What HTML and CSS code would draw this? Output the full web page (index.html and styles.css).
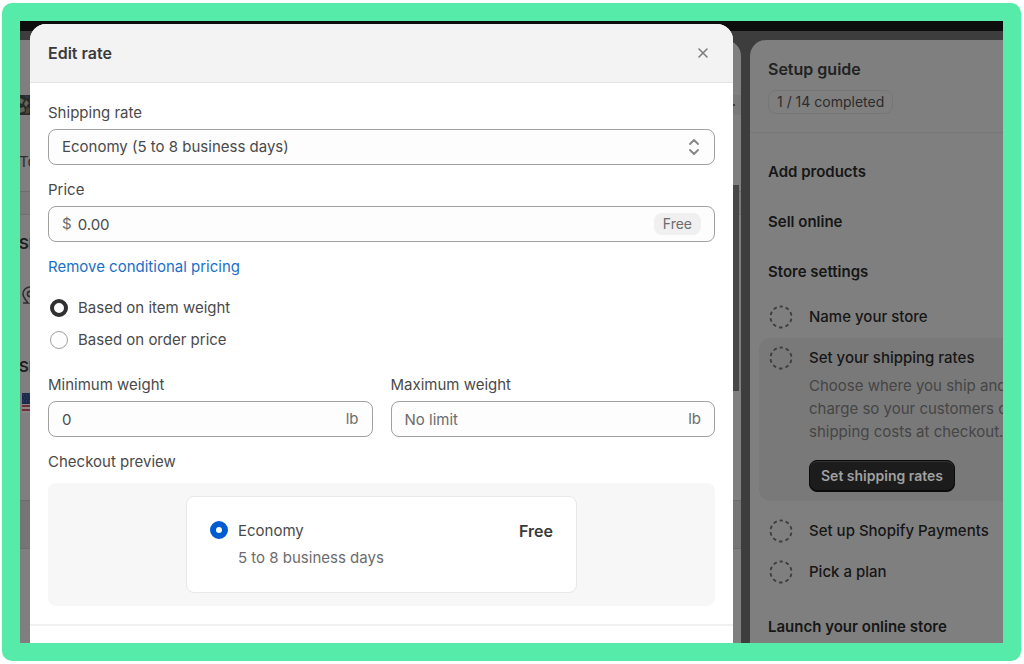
FILE: index.html
```
<!DOCTYPE html>
<html lang="en">

<head>
    <meta charset="UTF-8">
    <title>Edit rate</title>
    <link rel="stylesheet" href="styles.css">
</head>

<body>
    <svg class="defs" width="0" height="0">
        <symbol id="todo" viewBox="0 0 24 24">
            <circle cx="12" cy="12" r="10.5" fill="none" stroke="#3d3d3d" stroke-width="1.8" stroke-dasharray="3.6 3" stroke-dashoffset="1.8" transform="rotate(-90 12 12)" />
        </symbol>
    </svg>
    <div class="frame">
        <div class="screen">
            <div class="topbar"></div>
            <div class="page">
                <!-- settings page behind the dialog -->
                <section class="settings">
                    <div class="store">
                        <svg width="14" height="20" viewBox="0 0 14 20">
                            <rect width="14" height="20" fill="#2c2a28" />
                            <path d="M0 3l4 2-2 4-2-1zM6 5l3 3-3 4-2-3zM0 13l4-1 1 4-5 2z" fill="#66645c" />
                            <path d="M7 12l3 2-1 4-4 1z" fill="#4c4630" />
                            <path d="M4 0l5 1-2 3z" fill="#263a5a" />
                        </svg>
                        <span class="mark"></span>
                    </div>
                    <div class="row total">To</div>
                    <div class="strip"></div>
                    <h3 class="row">Sh</h3>
                    <div class="row place">
                        <svg width="16" height="20" viewBox="0 0 16 20" fill="none" stroke="#2e2e2e" stroke-width="1.6">
                            <path d="M1 17H6C3 13 1 11 1 8a7 7 0 0 1 14 0c0 4-4 6-7 10" />
                            <circle cx="8" cy="8" r="2.6" />
                        </svg>
                    </div>
                    <h3 class="row zone">Sh</h3>
                    <div class="row flag">
                        <svg width="26" height="20" viewBox="0 0 26 20">
                            <rect width="26" height="20" rx="1" fill="#8c8585" />
                            <path d="M0 1h26M0 5h26M0 9h26M0 13h26M0 17h26" stroke="#6e3038" stroke-width="2" />
                            <rect width="12" height="11" fill="#1c2a4e" />
                            <path d="M1 2h10M2 5h10M1 8h10" stroke="#3c476a" stroke-dasharray="1 2" />
                        </svg>
                    </div>
                    <div class="shade"></div>
                    <div class="scrollbar"></div>
                </section>

                <aside class="guide">
                    <header class="guide-head">
                        <h2>Setup guide</h2>
                        <span class="progress">1 / 14 completed</span>
                    </header>
                    <div class="guide-body">
                        <h3>Add products</h3>
                        <h3>Sell online</h3>
                        <h3>Store settings</h3>
                        <div class="task">
                            <svg class="todo"><use href="#todo" /></svg>
                            <h4>Name your store</h4>
                        </div>
                        <div class="task active">
                            <svg class="todo"><use href="#todo" /></svg>
                            <div>
                                <h4>Set your shipping rates</h4>
                                <p>Choose where you ship and<br>charge so your customers c<br>shipping costs at checkout.</p>
                                <button type="button" class="primary">Set shipping rates</button>
                            </div>
                        </div>
                        <div class="task">
                            <svg class="todo"><use href="#todo" /></svg>
                            <h4>Set up Shopify Payments</h4>
                        </div>
                        <div class="task">
                            <svg class="todo"><use href="#todo" /></svg>
                            <h4>Pick a plan</h4>
                        </div>
                        <h3 class="launch">Launch your online store</h3>
                    </div>
                </aside>
            </div>

            <!-- dialog -->
            <form class="modal" role="dialog" aria-labelledby="title">
                <header class="modal-head">
                    <h1 id="title">Edit rate</h1>
                    <button type="button" class="close" aria-label="Close">
                        <svg width="12" height="12" viewBox="0 0 12 12" stroke="#7d7d7d" stroke-width="1.6" stroke-linecap="round">
                            <path d="M2 2l8 8M10 2l-8 8" />
                        </svg>
                    </button>
                </header>
                <div class="modal-body">
                    <div class="field">
                        <label for="rate">Shipping rate</label>
                        <div class="control">
                            <select id="rate">
                                <option>Economy (5 to 8 business days)</option>
                            </select>
                            <svg width="14" height="16" viewBox="0 0 14 16" fill="none" stroke="#858585" stroke-width="1.8" stroke-linecap="round" stroke-linejoin="round">
                                <path d="M3 5l4-4 4 4M3 11l4 4 4-4" />
                            </svg>
                        </div>
                    </div>
                    <div class="field">
                        <label for="price">Price</label>
                        <div class="control">
                            <span class="unit">$</span>
                            <input id="price" type="text" value="0.00">
                            <span class="badge">Free</span>
                        </div>
                    </div>
                    <a class="link" href="#">Remove conditional pricing</a>
                    <div class="choices">
                        <label><input type="radio" name="basis" checked>Based on item weight</label>
                        <label><input type="radio" name="basis">Based on order price</label>
                    </div>
                    <div class="columns">
                        <div class="field">
                            <label for="min">Minimum weight</label>
                            <div class="control">
                                <input id="min" type="text" value="0">
                                <span class="unit">lb</span>
                            </div>
                        </div>
                        <div class="field">
                            <label for="max">Maximum weight</label>
                            <div class="control">
                                <input id="max" type="text" placeholder="No limit">
                                <span class="unit">lb</span>
                            </div>
                        </div>
                    </div>
                    <div class="checkout">
                        <h2>Checkout preview</h2>
                        <div class="preview">
                            <div class="card">
                                <input id="economy" class="blue" type="radio" name="preview" checked>
                                <div class="card-text">
                                    <label for="economy">Economy</label>
                                    <p>5 to 8 business days</p>
                                </div>
                                <strong>Free</strong>
                            </div>
                        </div>
                    </div>
                </div>
                <footer class="modal-foot"></footer>
            </form>
        </div>
    </div>
</body>

</html>
```
FILE: styles.css
```
* {
    margin: 0;
    padding: 0;
    box-sizing: border-box;
}

body {
    background: #fff;
    padding: 3px 3px 3px 2px;
    font-family: Inter, sans-serif;
    font-size: 15px;
    line-height: 20px;
    color: #4a4a4a;
}

input,
select,
button {
    font: inherit;
    color: inherit;
}

.defs {
    position: absolute;
}

.frame {
    height: calc(100vh - 6px);
    padding: 18px;
    background: #56eba8;
    border-radius: 10px;
}

.screen {
    position: relative;
    height: 100%;
    overflow: hidden;
    display: flex;
    flex-direction: column;
    background: #3d3d3d;
}

.topbar {
    flex: none;
    height: 10px;
    background: #0d0d0d;
}

.page {
    flex: 1;
    min-height: 0;
    display: grid;
    grid-template-columns: 1fr 253px;
    gap: 9px;
    padding-top: 9px;
}

/* settings page */
.settings {
    position: relative;
    overflow: hidden;
    background: #7f7f7f;
    border-radius: 0 16px 0 0;
    color: #2e2e2e;
    text-indent: -1px;
}

.store {
    display: flex;
    align-items: center;
    justify-content: space-between;
    height: 20px;
    margin-top: 55px;
    padding-right: 6px;
    background: #797979;
}

.mark {
    width: 4px;
    height: 2px;
    background: #3d3d3d;
}

.total {
    padding: 37px 0 19px;
    border-bottom: 1px solid #6c6c6c;
}

.strip {
    height: 23px;
    background: #7a7a7a;
    border-bottom: 1px solid #707070;
}

.settings h3 {
    padding-top: 19px;
    font-size: 15px;
    font-weight: 600;
    color: #1c1c1c;
}

.place {
    padding: 32px 3px 0;
}

.settings .zone {
    padding-top: 46px;
}

.flag {
    padding: 16px 3px 0;
}

.shade {
    height: 49px;
    margin-top: 82px;
    background: #757575;
    border-top: 1px solid #6c6c6c;
    border-bottom: 1px solid #6c6c6c;
}

.scrollbar {
    position: absolute;
    top: 145px;
    right: 2px;
    width: 8px;
    height: 206px;
    background: #474747;
}

/* setup guide */
.guide {
    overflow: hidden;
    white-space: nowrap;
    background: #7f7f7f;
    border-radius: 16px 0 0 0;
    color: #161616;
}

.guide-head {
    height: 93px;
    padding: 19px 18px 0;
    border-bottom: 1px solid #777;
}

.guide-head h2 {
    font-size: 16px;
    font-weight: 600;
    color: #222;
}

.progress {
    display: inline-block;
    margin-top: 11px;
    padding: 1px 8px;
    border: 1px solid #767676;
    border-radius: 8px;
    font-size: 14px;
    color: #2c2c2c;
}

.guide-body {
    padding: 29px 0 0 9px;
}

.guide-body h3 {
    padding: 0 9px;
    margin-bottom: 30px;
    font-size: 15px;
    font-weight: 600;
}

.guide-body h3:nth-of-type(3) {
    margin-bottom: 15px;
}

.task {
    display: flex;
    align-items: flex-start;
    gap: 16px;
    padding: 8px 10px 9px;
}

.task h4 {
    padding: 2px 0;
    font-size: 15px;
    font-weight: 500;
}

.todo {
    flex: none;
    width: 24px;
    height: 24px;
}

.active {
    margin-bottom: 10px;
    background: #797979;
    border-radius: 12px 0 0 12px;
}

.active p {
    margin-top: 4px;
    line-height: 23px;
    color: #454545;
}

.primary {
    display: block;
    height: 32px;
    margin-top: 17px;
    padding: 0 11px;
    border: 1px solid #0a0a0a;
    border-radius: 8px;
    background: #1c1c1c;
    box-shadow: inset 0 1px 0 #333, inset 0 -1px 0 #0a0a0a;
    font-size: 14px;
    font-weight: 600;
    color: #a0a0a0;
}

.guide-body .launch {
    margin-top: 24px;
}

/* dialog */
.modal {
    position: absolute;
    top: 3px;
    left: 10px;
    right: 270px;
    overflow: hidden;
    background: #fff;
    border-radius: 16px 16px 0 0;
}

.modal-head {
    display: flex;
    align-items: center;
    justify-content: space-between;
    height: 59px;
    padding: 0 18px;
    background: #f3f3f3;
    border-bottom: 1px solid #e3e3e3;
}

.modal-head h1 {
    font-size: 16px;
    font-weight: 600;
    color: #3a3a3a;
}

.close {
    display: flex;
    align-items: center;
    justify-content: center;
    width: 24px;
    height: 24px;
    border: 0;
    background: none;
}

.modal-body {
    display: flex;
    flex-direction: column;
    gap: 15px;
    padding: 20px 18px 18px;
}

.field > label {
    display: block;
    margin-bottom: 6px;
}

.control {
    display: flex;
    align-items: center;
    gap: 6px;
    height: 36px;
    padding: 0 13px;
    border: 1px solid #a0a0a0;
    border-radius: 8px;
    background: #fdfdfd;
}

.control input,
.control select {
    flex: 1;
    min-width: 0;
    height: 100%;
    border: 0;
    outline: 0;
    background: none;
    appearance: none;
}

.control input::placeholder,
.unit {
    color: #6c6c6c;
}

.badge {
    padding: 1px 9px;
    border-radius: 8px;
    background: #f0f0f0;
    font-size: 14px;
    color: #6c6c6c;
}

.link {
    align-self: flex-start;
    color: #1a6fc9;
    text-decoration: none;
}

.choices {
    display: flex;
    flex-direction: column;
    gap: 12px;
    padding: 6px 0 10px;
}

.choices label {
    display: flex;
    align-items: center;
    gap: 10px;
    padding-left: 2px;
}

[type="radio"] {
    flex: none;
    width: 18px;
    height: 18px;
    border: 1px solid #a0a0a0;
    border-radius: 50%;
    background: #fdfdfd;
    appearance: none;
}

[type="radio"]:checked {
    border: 4px solid #303030;
}

.columns {
    display: grid;
    grid-template-columns: 1fr 1fr;
    gap: 18px;
}

.checkout h2 {
    margin-bottom: 11px;
    font-size: 15px;
    font-weight: 400;
}

.preview {
    display: flex;
    justify-content: center;
    padding: 13px;
    border-radius: 8px;
    background: #f7f7f7;
}

.card {
    display: flex;
    align-items: flex-start;
    gap: 10px;
    width: 61%;
    padding: 24px 23px;
    border: 1px solid #e8e8e8;
    border-radius: 8px;
    background: #fff;
}

.card .blue:checked {
    border: 6px solid #005bd1;
}

.card-text {
    flex: 1;
}

.card-text p {
    margin-top: 7px;
    color: #6c6c6c;
}

.card strong {
    font-size: 16px;
    font-weight: 600;
    color: #3a3a3a;
}

.modal-foot {
    height: 72px;
    border-top: 2px solid #f1f1f1;
}
```
